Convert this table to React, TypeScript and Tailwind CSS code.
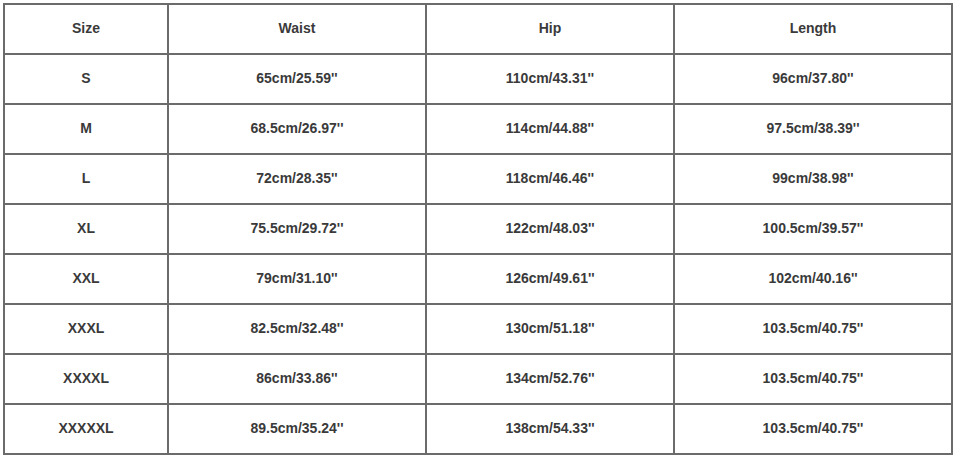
const rows = [
  ["S", "65cm/25.59''", "110cm/43.31''", "96cm/37.80''"],
  ["M", "68.5cm/26.97''", "114cm/44.88''", "97.5cm/38.39''"],
  ["L", "72cm/28.35''", "118cm/46.46''", "99cm/38.98''"],
  ["XL", "75.5cm/29.72''", "122cm/48.03''", "100.5cm/39.57''"],
  ["XXL", "79cm/31.10''", "126cm/49.61''", "102cm/40.16''"],
  ["XXXL", "82.5cm/32.48''", "130cm/51.18''", "103.5cm/40.75''"],
  ["XXXXL", "86cm/33.86''", "134cm/52.76''", "103.5cm/40.75''"],
  ["XXXXXL", "89.5cm/35.24''", "138cm/54.33''", "103.5cm/40.75''"],
];

export default function App() {
  const all = [["Size", "Waist", "Hip", "Length"], ...rows];
  return (
    <div className="w-[956px] h-[457px] bg-white overflow-hidden pt-[3px] pl-[3px]" style={{ fontFamily: '"Liberation Sans", Arial, sans-serif' }}>
      <div className="inline-grid grid-cols-[164px_258px_248px_278px] border-l-2 border-t-2 border-[#6b6b6b]">
        {all.map((r, i) =>
          r.map((cell, j) => (
            <div
              key={i + "-" + j}
              className="h-[50px] flex items-center justify-center border-r-2 border-b-2 border-[#6b6b6b] text-[14px] font-bold text-[#3a3a3a] pb-[1px]"
            >
              {cell}
            </div>
          ))
        )}
      </div>
    </div>
  );
}
